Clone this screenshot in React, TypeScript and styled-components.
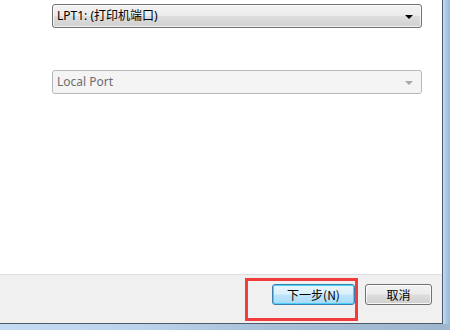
import React from "react";
import styled, { createGlobalStyle } from "styled-components";

const GlobalStyle = createGlobalStyle`
  html, body {
    margin: 0;
    padding: 0;
    background: #ffffff;
  }
  body {
    font-family: "Noto Sans", "Noto Sans CJK SC", sans-serif;
    font-size: 12px;
  }
`;

const Frame = styled.div`
  position: relative;
  width: 450px;
  height: 330px;
  box-sizing: border-box;
  display: flex;
  padding: 0 7px 6px 0;
  background: linear-gradient(90deg, #c4dbf3 0%, #bcd3ec 30%, #a8bfd8 60%, #9fb6cf 100%);
`;

const RightEdge = styled.div`
  position: absolute;
  top: 0;
  right: 0;
  bottom: 6px;
  width: 7px;
  background: linear-gradient(90deg, #c6dcf2 0%, #a9c6e4 50%, #9bb6d3 100%);
`;

const Client = styled.div`
  flex: 1;
  display: flex;
  flex-direction: column;
  border-right: 1px solid #4d5a69;
  border-bottom: 1px solid #4d5a69;
  position: relative;
  z-index: 1;
`;

const Content = styled.div`
  flex: 1;
  background: #ffffff;
  padding: 4px 20px 0 52px;
  display: flex;
  flex-direction: column;
  gap: 42px;
`;

const Combo = styled.div<{ disabled?: boolean }>`
  height: 24px;
  box-sizing: border-box;
  border: 1px solid ${({ disabled }) => (disabled ? "#b4b8bb" : "#707070")};
  border-radius: 3px;
  display: flex;
  align-items: center;
  padding: 0 8px 0 4px;
  color: ${({ disabled }) => (disabled ? "#6d6d6d" : "#000000")};
  background: ${({ disabled }) =>
    disabled
      ? "#f4f4f4"
      : "linear-gradient(180deg, #f3f3f3 0%, #ebebeb 48%, #dddddd 52%, #d0d0d0 100%)"};
  box-shadow: ${({ disabled }) =>
    disabled ? "none" : "inset 0 0 0 1px rgba(255,255,255,0.7)"};
`;

const ComboText = styled.span`
  flex: 1;
  font-family: "Noto Sans", "Noto Sans CJK SC", sans-serif;
  font-size: 12px;
  line-height: 16px;
  white-space: nowrap;
`;

const Arrow = styled.span<{ disabled?: boolean }>`
  width: 0;
  height: 0;
  border-left: 4px solid transparent;
  border-right: 4px solid transparent;
  border-top: 4px solid ${({ disabled }) => (disabled ? "#a8a8a8" : "#000000")};
  margin-top: 1px;
`;

const Footer = styled.div`
  height: 39px;
  border-top: 1px solid #dfdfdf;
  background: #f0f0f0;
  display: flex;
  justify-content: flex-end;
  align-items: flex-start;
  gap: 10px;
  padding: 9px 10px 0 0;
`;

const Button = styled.button<{ primary?: boolean; w: number }>`
  width: ${({ w }) => w}px;
  height: 21px;
  box-sizing: border-box;
  padding: 0;
  border-radius: 3px;
  font-family: "Noto Sans CJK SC", "Noto Sans", sans-serif;
  font-size: 12px;
  line-height: 16px;
  color: #000000;
  border: 1px solid ${({ primary }) => (primary ? "#3c7fb1" : "#707070")};
  background: ${({ primary }) =>
    primary
      ? "linear-gradient(180deg, #eaf6fd 0%, #d9f0fc 48%, #bee6fd 52%, #a7d9f5 100%)"
      : "linear-gradient(180deg, #f2f2f2 0%, #ebebeb 48%, #dddddd 52%, #cfcfcf 100%)"};
  box-shadow: ${({ primary }) =>
    primary
      ? "inset 0 0 0 1px #48d0f8"
      : "inset 0 0 0 1px rgba(255,255,255,0.8)"};
`;

const Highlight = styled.div`
  position: absolute;
  left: 245px;
  top: 278px;
  width: 113px;
  height: 43px;
  box-sizing: border-box;
  border: 3px solid #f03c3c;
  z-index: 2;
  pointer-events: none;
`;

const App: React.FC = () => (
  <>
    <GlobalStyle />
    <Frame>
      <RightEdge />
      <Client>
        <Content>
          <Combo>
            <ComboText>LPT1: (打印机端口)</ComboText>
            <Arrow />
          </Combo>
          <Combo disabled>
            <ComboText>Local Port</ComboText>
            <Arrow disabled />
          </Combo>
        </Content>
        <Footer>
          <Button primary w={83}>
            下一步(N)
          </Button>
          <Button w={67}>取消</Button>
        </Footer>
      </Client>
      <Highlight />
    </Frame>
  </>
);

export default App;
